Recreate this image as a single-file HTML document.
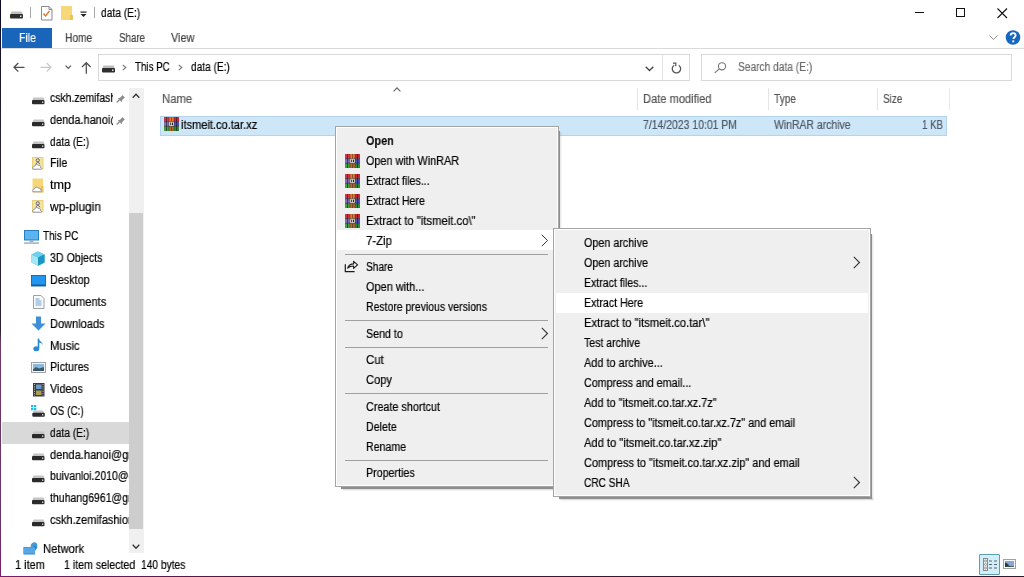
<!DOCTYPE html>
<html><head><meta charset="utf-8">
<style>
html,body{margin:0;padding:0}
body{width:1024px;height:577px;overflow:hidden;position:relative;background:#fff;font-family:"Liberation Sans",sans-serif;}
.a{position:absolute}
.t{position:absolute;white-space:nowrap;font-size:12px;line-height:20px;color:#000;-webkit-text-stroke:0.2px currentColor}
.t>div{transform-origin:0 0;will-change:transform}
svg{position:absolute;overflow:visible}
.menu{position:absolute;background:#efefef;border:1px solid #a4a4a4;box-shadow:inset 1px 1px 0 #fff,inset -1px -1px 0 #fff}
.sep{position:absolute;height:1px;background:#a0a0a0}
.hl{position:absolute;background:#fff}
.drv{position:absolute;width:12px;height:7px}
</style></head><body>
<!-- window border -->
<div class="a" style="left:0;top:0;width:1px;height:577px;background:linear-gradient(#0e0a26 0px,#2a2434 150px,#2a2030 330px,#6a3a6a 342px,#6a3468 520px,#7a2072 577px)"></div>
<div class="a" style="left:0;top:576px;width:1024px;height:1px;background:linear-gradient(90deg,#7a1a70,#3a1838 30%,#2a1a30)"></div>

<!-- title bar icons -->
<svg style="left:10px;top:11px" width="13" height="8"><path d="M1.5 0.5h10l1 2.5h-12z" fill="#bdbdbd"/><rect x="0" y="3" width="13" height="4.5" rx="1" fill="#2e2e2e"/><rect x="10" y="4.5" width="1.5" height="1.5" fill="#ddd"/></svg>
<div class="a" style="left:30px;top:7px;width:1px;height:11px;background:#a8a8a8"></div>
<svg style="left:41px;top:6px" width="12" height="15"><path d="M0.5 0.5h7.5l3 3v10.5h-10.5z" fill="#fff" stroke="#8a8a8a"/><path d="M8 0.5v3h3" fill="none" stroke="#8a8a8a"/><path d="M2.5 7.5l2 2.5l4-5" fill="none" stroke="#d8742c" stroke-width="1.3"/></svg>
<svg style="left:61px;top:6px" width="12" height="15"><rect x="0" y="0" width="11" height="14" fill="#f6d879"/><rect x="9" y="9" width="3" height="5" fill="#eac45a"/></svg>
<svg style="left:80px;top:11px" width="8" height="7"><rect x="0.5" y="0.5" width="6" height="1.2" fill="#222"/><path d="M0.5 3h6l-3 3z" fill="#222"/></svg>
<div class="a" style="left:94px;top:7px;width:1px;height:11px;background:#a8a8a8"></div>

<!-- window controls -->
<div class="a" style="left:915px;top:12px;width:9px;height:1px;background:#111"></div>
<div class="a" style="left:956px;top:8px;width:7px;height:7px;border:1px solid #111"></div>
<svg style="left:997px;top:8px" width="11" height="10"><path d="M0.5 0.5l9.5 9.5M10 0.5l-9.5 9.5" stroke="#111" stroke-width="1.1"/></svg>

<!-- ribbon -->
<div class="a" style="left:2px;top:28px;width:50px;height:20px;background:#1865ba"></div>
<div class="a" style="left:1px;top:48px;width:1023px;height:1px;background:#dadada"></div>
<svg style="left:989px;top:35px" width="9" height="6"><path d="M0.5 0.5l4 4l4-4" fill="none" stroke="#8a8a8a" stroke-width="1"/></svg>
<svg style="left:1005px;top:30px" width="16" height="16"><circle cx="8" cy="7.5" r="7.3" fill="#1667c1"/><path d="M5.6 5.6c0-1.6 1.1-2.5 2.5-2.5s2.5 0.9 2.5 2.3c0 1.8-2.2 1.9-2.2 3.7" fill="none" stroke="#fff" stroke-width="1.8"/><rect x="7.3" y="10.4" width="1.9" height="1.9" fill="#fff"/></svg>

<!-- nav buttons -->
<svg style="left:13px;top:62px" width="12" height="11"><path d="M1 5.3h10.5M5.3 1l-4.3 4.3l4.3 4.3" fill="none" stroke="#505050" stroke-width="1.3"/></svg>
<svg style="left:40px;top:62px" width="12" height="11"><path d="M0.5 5.3h10.5M6.7 1l4.3 4.3l-4.3 4.3" fill="none" stroke="#c8c8c8" stroke-width="1.2"/></svg>
<svg style="left:65px;top:65px" width="7" height="5"><path d="M0.6 0.6l2.7 2.7l2.7-2.7" fill="none" stroke="#555" stroke-width="1.2"/></svg>
<svg style="left:81px;top:62px" width="11" height="12"><path d="M5.3 11.8v-11M1 5l4.3-4.3l4.3 4.3" fill="none" stroke="#505050" stroke-width="1.3"/></svg>

<!-- address box -->
<div class="a" style="left:98px;top:54px;width:590px;height:25px;border:1px solid #d9d9d9"></div>
<div class="a" style="left:662px;top:55px;width:1px;height:25px;background:#e5e5e5"></div>
<svg style="left:102px;top:65px" width="13" height="8"><path d="M1.5 0.5h10l1 2.5h-12z" fill="#bdbdbd"/><rect x="0" y="3" width="13" height="4.5" rx="1" fill="#2e2e2e"/><rect x="10" y="4.5" width="1.5" height="1.5" fill="#ddd"/></svg>
<svg style="left:122px;top:64px" width="5" height="7"><path d="M0.8 0.8l3 2.7l-3 2.7" fill="none" stroke="#777" stroke-width="1.1"/></svg>
<svg style="left:178px;top:64px" width="5" height="7"><path d="M0.8 0.8l3 2.7l-3 2.7" fill="none" stroke="#777" stroke-width="1.1"/></svg>
<svg style="left:645px;top:66px" width="9" height="6"><path d="M0.7 0.7l3.8 3.8l3.8-3.8" fill="none" stroke="#444" stroke-width="1.3"/></svg>
<svg style="left:671px;top:62px" width="11" height="12"><path d="M3.2 3.2a4.2 4.2 0 1 0 4.5 0" fill="none" stroke="#555" stroke-width="1.3"/><path d="M2 1.2h2.8v3" fill="none" stroke="#555" stroke-width="1.2"/></svg>

<!-- search box -->
<div class="a" style="left:701px;top:54px;width:309px;height:25px;border:1px solid #d9d9d9"></div>
<svg style="left:714px;top:62px" width="13" height="11"><circle cx="8" cy="4.3" r="3.6" fill="none" stroke="#777" stroke-width="1.1"/><path d="M5.3 6.9l-4.6 4" stroke="#777" stroke-width="1.2"/></svg>

<!-- nav pane scrollbar -->
<div class="a" style="left:129px;top:88px;width:15px;height:465px;background:#f0f0f0"></div>
<div class="a" style="left:129px;top:213px;width:14px;height:316px;background:#cdcdcd"></div>
<svg style="left:132px;top:93px" width="8" height="6"><path d="M0.7 4.7l3.3-3.5l3.3 3.5" fill="none" stroke="#333" stroke-width="1.3"/></svg>
<svg style="left:132px;top:544px" width="8" height="6"><path d="M0.7 0.8l3.3 3.5l3.3-3.5" fill="none" stroke="#333" stroke-width="1.3"/></svg>
<!-- nav highlight data (E:) -->
<div class="a" style="left:2px;top:422px;width:127px;height:22px;background:#d9d9d9"></div>

<svg style="left:32px;top:97px" width="13" height="8"><path d="M1.5 0.5h10l1 2.5h-12z" fill="#c4c4c4"/><rect x="0" y="3" width="12.5" height="4.3" rx="1" fill="#2a2a2a"/><rect x="10" y="4.5" width="1.3" height="1.3" fill="#eee"/></svg>
<svg style="left:32px;top:119px" width="13" height="8"><path d="M1.5 0.5h10l1 2.5h-12z" fill="#c4c4c4"/><rect x="0" y="3" width="12.5" height="4.3" rx="1" fill="#2a2a2a"/><rect x="10" y="4.5" width="1.3" height="1.3" fill="#eee"/></svg>
<svg style="left:32px;top:141px" width="13" height="8"><path d="M1.5 0.5h10l1 2.5h-12z" fill="#c4c4c4"/><rect x="0" y="3" width="12.5" height="4.3" rx="1" fill="#2a2a2a"/><rect x="10" y="4.5" width="1.3" height="1.3" fill="#eee"/></svg>
<svg style="left:116px;top:94px" width="10" height="9"><path d="M0.7 8.5l3-3" stroke="#8c8c8c" stroke-width="1.3"/><path d="M1.8 4.3l3.9 3.9l0.5-2.2l2.2-2.2l0.9 0.2l-3.3-3.3l0.2 0.9l-2.2 2.2z" fill="#8c8c8c"/></svg>
<svg style="left:116px;top:116px" width="10" height="9"><path d="M0.7 8.5l3-3" stroke="#8c8c8c" stroke-width="1.3"/><path d="M1.8 4.3l3.9 3.9l0.5-2.2l2.2-2.2l0.9 0.2l-3.3-3.3l0.2 0.9l-2.2 2.2z" fill="#8c8c8c"/></svg>
<svg style="left:32px;top:157px" width="12" height="13"><rect x="0.5" y="0.5" width="10.5" height="11.5" fill="#f7e3a0" stroke="#e8cf7a" stroke-width="1"/><circle cx="5.8" cy="3.3" r="1.6" fill="none" stroke="#5a6a80" stroke-width="1"/><path d="M3.5 7.2l2.3-2.2l2.3 2.2" fill="none" stroke="#5a6a80" stroke-width="1"/><path d="M1 12.2c-0.8-1.5 0.2-3 1.6-3c0.4-1.6 2.6-2.3 3.8-0.8c1.3-0.3 2.4 0.8 2.1 2c1.2 0 1.4 1.8 0.3 1.8z" fill="#fff" stroke="#7a8aac" stroke-width="0.9"/></svg>
<svg style="left:32px;top:178px" width="12" height="15"><path d="M0.5 0.5h10.5v14h-10.5z" fill="#f6d676"/><rect x="9" y="8" width="2.5" height="6.5" fill="#e6c05a"/><path d="M1 13.8c-0.8-1.5 0.2-3 1.6-3c0.4-1.6 2.6-2.3 3.8-0.8c1.3-0.3 2.4 0.8 2.1 2c1.2 0 1.4 1.8 0.3 1.8z" fill="#fff" stroke="#7a8aac" stroke-width="0.9"/></svg>
<svg style="left:32px;top:200px" width="12" height="13"><rect x="0.5" y="0.5" width="10.5" height="11.5" fill="#f7e3a0" stroke="#e8cf7a" stroke-width="1"/><circle cx="5.8" cy="3.3" r="1.6" fill="none" stroke="#5a6a80" stroke-width="1"/><path d="M3.5 7.2l2.3-2.2l2.3 2.2" fill="none" stroke="#5a6a80" stroke-width="1"/><path d="M1 12.2c-0.8-1.5 0.2-3 1.6-3c0.4-1.6 2.6-2.3 3.8-0.8c1.3-0.3 2.4 0.8 2.1 2c1.2 0 1.4 1.8 0.3 1.8z" fill="#fff" stroke="#7a8aac" stroke-width="0.9"/></svg>
<svg style="left:23.5px;top:230px" width="15" height="14"><rect x="0.5" y="0.5" width="14" height="9.5" fill="#5ab4ef" stroke="#2a7cc0" stroke-width="1"/><rect x="5.5" y="10.5" width="4" height="1.5" fill="#9ab"/><rect x="0" y="12.5" width="15" height="1.2" fill="#8a9aa8"/></svg>
<svg style="left:31px;top:251px" width="14" height="15"><path d="M7 0.5l6.5 3v8l-6.5 3.2l-6.5-3.2v-8z" fill="#2ab2d8"/><path d="M0.5 3.5l6.5 3v8.2l-6.5-3.2z" fill="#a6e6f4"/><path d="M7 0.5l6.5 3l-6.5 3l-6.5-3z" fill="#6fd0ec"/><path d="M13.5 3.5l-6.5 3v8.2l6.5-3.2z" fill="#1c98c4"/></svg>
<svg style="left:30.6px;top:275px" width="15" height="12"><rect x="0.5" y="0.5" width="14" height="10.5" fill="#2196f0" stroke="#1a6eb8" stroke-width="1"/><rect x="1" y="9.5" width="13" height="1.5" fill="#1a5a9a"/></svg>
<svg style="left:32.5px;top:295px" width="12" height="14"><path d="M0.5 0.5h7.5l3 3v10h-10.5z" fill="#fafafa" stroke="#9aa0a8" stroke-width="1"/><path d="M2.5 4h4M2.5 6h6M2.5 8h6M2.5 10h6" stroke="#5a9ad0" stroke-width="0.9"/></svg>
<svg style="left:30.6px;top:316px" width="15" height="15"><path d="M5 0.5h5v7h4.5l-7 7l-7-7h4.5z" fill="#3d8fd8"/></svg>
<svg style="left:32.5px;top:338px" width="11" height="14"><path d="M5.5 0.5v9.5" stroke="#2a8ad8" stroke-width="1.6"/><ellipse cx="3.3" cy="10.8" rx="3" ry="2.5" fill="#2a8ad8"/><path d="M5.5 0.8c0.5 2.5 4.8 3.2 4.5 7c-0.2-2.3-2.5-3-4.5-3.2z" fill="#2a8ad8"/></svg>
<svg style="left:30.6px;top:362px" width="15" height="11"><rect x="0.5" y="0.5" width="14" height="10" fill="#f4f4f4" stroke="#a0a4a8" stroke-width="1"/><rect x="2" y="2" width="11" height="7" fill="#8ab8e0"/><path d="M2 7.5l3-2.5l3 1.5l5-1.5v4h-11z" fill="#3a5a6a"/></svg>
<svg style="left:32.5px;top:383px" width="12" height="14"><rect x="0" y="0" width="11.5" height="13.5" fill="#3a3a44"/><rect x="3" y="1.5" width="5.5" height="4.5" fill="#6a9ac8"/><rect x="3" y="7.5" width="5.5" height="4.5" fill="#a8a050"/><path d="M1.5 1v12M10 1v12" stroke="#ccc" stroke-width="0.9" stroke-dasharray="1 1.3"/></svg>
<svg style="left:30px;top:405px" width="15" height="12"><rect x="1" y="0" width="2.3" height="2.3" fill="#1fb8e8"/><rect x="4" y="0" width="2.3" height="2.3" fill="#1fb8e8"/><rect x="1" y="3" width="2.3" height="2.3" fill="#1fb8e8"/><rect x="4" y="3" width="2.3" height="2.3" fill="#1fb8e8"/><path d="M3.5 5.5h9.5l1 2.5h-11z" fill="#c4c4c4"/><rect x="2.3" y="7.8" width="12.5" height="4" rx="1" fill="#2a2a2a"/><rect x="12" y="9.2" width="1.3" height="1.3" fill="#eee"/></svg>
<svg style="left:32px;top:431px" width="13" height="8"><path d="M1.5 0.5h10l1 2.5h-12z" fill="#c4c4c4"/><rect x="0" y="3" width="12.5" height="4.3" rx="1" fill="#2a2a2a"/><rect x="10" y="4.5" width="1.3" height="1.3" fill="#eee"/></svg>
<svg style="left:32px;top:453px" width="13" height="8"><path d="M1.5 0.5h10l1 2.5h-12z" fill="#c4c4c4"/><rect x="0" y="3" width="12.5" height="4.3" rx="1" fill="#2a2a2a"/><rect x="10" y="4.5" width="1.3" height="1.3" fill="#eee"/></svg>
<svg style="left:32px;top:475px" width="13" height="8"><path d="M1.5 0.5h10l1 2.5h-12z" fill="#c4c4c4"/><rect x="0" y="3" width="12.5" height="4.3" rx="1" fill="#2a2a2a"/><rect x="10" y="4.5" width="1.3" height="1.3" fill="#eee"/></svg>
<svg style="left:32px;top:497px" width="13" height="8"><path d="M1.5 0.5h10l1 2.5h-12z" fill="#c4c4c4"/><rect x="0" y="3" width="12.5" height="4.3" rx="1" fill="#2a2a2a"/><rect x="10" y="4.5" width="1.3" height="1.3" fill="#eee"/></svg>
<svg style="left:32px;top:519px" width="13" height="8"><path d="M1.5 0.5h10l1 2.5h-12z" fill="#c4c4c4"/><rect x="0" y="3" width="12.5" height="4.3" rx="1" fill="#2a2a2a"/><rect x="10" y="4.5" width="1.3" height="1.3" fill="#eee"/></svg>
<svg style="left:23.4px;top:542.4px" width="15" height="12"><path d="M7.5 4.5c0-2.5 2-4.2 4-4.2c2 0 3.2 2 2.8 4.2l-1.5 2.5z" fill="#4a9ad8"/><path d="M0.5 5h9.5l2-2l2.5 2.5l-2.5 3.5v3.5h-11.5z" fill="#2d8ad6"/><rect x="0.5" y="5.5" width="11.5" height="6" fill="#58a8e8"/></svg>

<!-- column headers -->
<svg style="left:393px;top:87px" width="8" height="5"><path d="M0.6 4.3l3.4-3.4l3.4 3.4" fill="none" stroke="#606060" stroke-width="1.1"/></svg>
<div class="a" style="left:637px;top:88px;width:1px;height:22px;background:#e5e5e5"></div>
<div class="a" style="left:768px;top:88px;width:1px;height:22px;background:#e5e5e5"></div>
<div class="a" style="left:877px;top:88px;width:1px;height:22px;background:#e5e5e5"></div>
<div class="a" style="left:949px;top:88px;width:1px;height:22px;background:#e8e8e8"></div>

<!-- selected row -->
<div class="a" style="left:160px;top:116px;width:785px;height:18px;background:#cde6f8;border:1px solid #b3d4ec"></div>
<svg style="left:163.5px;top:117px" width="15" height="14"><rect x="0" y="0.00" width="5" height="4.67" fill="#d03848"/><rect x="5" y="0.00" width="5" height="4.67" fill="#e8782e"/><rect x="10" y="0.00" width="5" height="4.67" fill="#c42838"/><rect x="0" y="4.67" width="5" height="4.67" fill="#8070b8"/><rect x="5" y="4.67" width="5" height="4.67" fill="#f2ece6"/><rect x="10" y="4.67" width="5" height="4.67" fill="#4a50b8"/><rect x="0" y="9.34" width="5" height="4.67" fill="#3ea040"/><rect x="5" y="9.34" width="5" height="4.67" fill="#b06a30"/><rect x="10" y="9.34" width="5" height="4.67" fill="#2a8a38"/><path d="M2.5 0v14M12.5 0v14" stroke="#1a1010" stroke-width="1" opacity="0.55"/><path d="M5 0v14M10 0v14" stroke="#2a1818" stroke-width="0.8" opacity="0.5"/><path d="M0 4.67h15M0 9.33h15" stroke="#1a1010" stroke-width="0.9" opacity="0.55"/><path d="M7.5 0v4.5M7.5 9.5v4.5" stroke="#1a1010" stroke-width="0.9" opacity="0.45"/><rect x="6.2" y="5.6" width="1" height="2.6" fill="#222"/><rect x="8" y="5.6" width="1" height="2.6" fill="#222"/></svg>

<!-- status bar view icons -->
<div class="a" style="left:979px;top:554px;width:21px;height:21px;background:#d2eef8;border:1px solid #5f9cb0;box-sizing:border-box;border-radius:1px"></div>
<svg style="left:983px;top:558px" width="15" height="13"><rect x="0.5" y="0.5" width="4" height="12" fill="#f4f4f4" stroke="#8a8a8a" stroke-width="1"/><circle cx="2.5" cy="3" r="1" fill="none" stroke="#777" stroke-width="0.7"/><circle cx="2.5" cy="6.5" r="1" fill="none" stroke="#777" stroke-width="0.7"/><circle cx="2.5" cy="10" r="1" fill="none" stroke="#777" stroke-width="0.7"/><path d="M6 3h3M11 3h3M6 6.5h3M11 6.5h3M6 10h3M11 10h3" stroke="#5a6670" stroke-width="1.2"/></svg>
<svg style="left:1003px;top:559px" width="13" height="10"><rect x="0.5" y="0.5" width="12" height="9" fill="#fafafa" stroke="#a0a0a0" stroke-width="1"/><path d="M2 2h9v6h-9z" fill="#86a8d8"/><path d="M2 4.5c2 0.5 3 2 5 2.5c1.5 0.3 3 0 4 0.5v0.5h-9z" fill="#3a5040"/><path d="M2 3.5c1.5 0 2.5 1.5 4 2.5l-4 2z" fill="#2a3a30"/></svg>

<!-- MENUS -->
<div class="a" style="left:559px;top:131px;width:1px;height:358px;background:#8e8e8e;box-shadow:1px 1px 2px rgba(0,0,0,0.18)"></div>
<div class="a" style="left:341px;top:487px;width:219px;height:2px;background:#8e8e8e;box-shadow:1px 1px 2px rgba(0,0,0,0.18)"></div>
<div class="menu" style="left:335px;top:126px;width:222px;height:359px"></div>
<div class="hl" style="left:337px;top:230px;width:220px;height:20px"></div>
<div class="sep" style="left:345px;top:254px;width:203px"></div>
<div class="sep" style="left:345px;top:320px;width:203px"></div>
<div class="sep" style="left:345px;top:347px;width:203px"></div>
<div class="sep" style="left:345px;top:393px;width:203px"></div>
<div class="sep" style="left:345px;top:460px;width:203px"></div>
<svg style="left:541px;top:234px" width="8" height="13"><path d="M0.8 0.8l5.7 5.7l-5.7 5.7" fill="none" stroke="#333" stroke-width="1"/></svg>
<svg style="left:541px;top:327px" width="8" height="13"><path d="M0.8 0.8l5.7 5.7l-5.7 5.7" fill="none" stroke="#333" stroke-width="1.1"/></svg>
<svg style="left:344.5px;top:154px" width="15" height="14"><rect x="0" y="0.00" width="5" height="4.67" fill="#d03848"/><rect x="5" y="0.00" width="5" height="4.67" fill="#e8782e"/><rect x="10" y="0.00" width="5" height="4.67" fill="#c42838"/><rect x="0" y="4.67" width="5" height="4.67" fill="#8070b8"/><rect x="5" y="4.67" width="5" height="4.67" fill="#f2ece6"/><rect x="10" y="4.67" width="5" height="4.67" fill="#4a50b8"/><rect x="0" y="9.34" width="5" height="4.67" fill="#3ea040"/><rect x="5" y="9.34" width="5" height="4.67" fill="#b06a30"/><rect x="10" y="9.34" width="5" height="4.67" fill="#2a8a38"/><path d="M2.5 0v14M12.5 0v14" stroke="#1a1010" stroke-width="1" opacity="0.55"/><path d="M5 0v14M10 0v14" stroke="#2a1818" stroke-width="0.8" opacity="0.5"/><path d="M0 4.67h15M0 9.33h15" stroke="#1a1010" stroke-width="0.9" opacity="0.55"/><path d="M7.5 0v4.5M7.5 9.5v4.5" stroke="#1a1010" stroke-width="0.9" opacity="0.45"/><rect x="6.2" y="5.6" width="1" height="2.6" fill="#222"/><rect x="8" y="5.6" width="1" height="2.6" fill="#222"/></svg>
<svg style="left:344.5px;top:174px" width="15" height="14"><rect x="0" y="0.00" width="5" height="4.67" fill="#d03848"/><rect x="5" y="0.00" width="5" height="4.67" fill="#e8782e"/><rect x="10" y="0.00" width="5" height="4.67" fill="#c42838"/><rect x="0" y="4.67" width="5" height="4.67" fill="#8070b8"/><rect x="5" y="4.67" width="5" height="4.67" fill="#f2ece6"/><rect x="10" y="4.67" width="5" height="4.67" fill="#4a50b8"/><rect x="0" y="9.34" width="5" height="4.67" fill="#3ea040"/><rect x="5" y="9.34" width="5" height="4.67" fill="#b06a30"/><rect x="10" y="9.34" width="5" height="4.67" fill="#2a8a38"/><path d="M2.5 0v14M12.5 0v14" stroke="#1a1010" stroke-width="1" opacity="0.55"/><path d="M5 0v14M10 0v14" stroke="#2a1818" stroke-width="0.8" opacity="0.5"/><path d="M0 4.67h15M0 9.33h15" stroke="#1a1010" stroke-width="0.9" opacity="0.55"/><path d="M7.5 0v4.5M7.5 9.5v4.5" stroke="#1a1010" stroke-width="0.9" opacity="0.45"/><rect x="6.2" y="5.6" width="1" height="2.6" fill="#222"/><rect x="8" y="5.6" width="1" height="2.6" fill="#222"/></svg>
<svg style="left:344.5px;top:194px" width="15" height="14"><rect x="0" y="0.00" width="5" height="4.67" fill="#d03848"/><rect x="5" y="0.00" width="5" height="4.67" fill="#e8782e"/><rect x="10" y="0.00" width="5" height="4.67" fill="#c42838"/><rect x="0" y="4.67" width="5" height="4.67" fill="#8070b8"/><rect x="5" y="4.67" width="5" height="4.67" fill="#f2ece6"/><rect x="10" y="4.67" width="5" height="4.67" fill="#4a50b8"/><rect x="0" y="9.34" width="5" height="4.67" fill="#3ea040"/><rect x="5" y="9.34" width="5" height="4.67" fill="#b06a30"/><rect x="10" y="9.34" width="5" height="4.67" fill="#2a8a38"/><path d="M2.5 0v14M12.5 0v14" stroke="#1a1010" stroke-width="1" opacity="0.55"/><path d="M5 0v14M10 0v14" stroke="#2a1818" stroke-width="0.8" opacity="0.5"/><path d="M0 4.67h15M0 9.33h15" stroke="#1a1010" stroke-width="0.9" opacity="0.55"/><path d="M7.5 0v4.5M7.5 9.5v4.5" stroke="#1a1010" stroke-width="0.9" opacity="0.45"/><rect x="6.2" y="5.6" width="1" height="2.6" fill="#222"/><rect x="8" y="5.6" width="1" height="2.6" fill="#222"/></svg>
<svg style="left:344.5px;top:214px" width="15" height="14"><rect x="0" y="0.00" width="5" height="4.67" fill="#d03848"/><rect x="5" y="0.00" width="5" height="4.67" fill="#e8782e"/><rect x="10" y="0.00" width="5" height="4.67" fill="#c42838"/><rect x="0" y="4.67" width="5" height="4.67" fill="#8070b8"/><rect x="5" y="4.67" width="5" height="4.67" fill="#f2ece6"/><rect x="10" y="4.67" width="5" height="4.67" fill="#4a50b8"/><rect x="0" y="9.34" width="5" height="4.67" fill="#3ea040"/><rect x="5" y="9.34" width="5" height="4.67" fill="#b06a30"/><rect x="10" y="9.34" width="5" height="4.67" fill="#2a8a38"/><path d="M2.5 0v14M12.5 0v14" stroke="#1a1010" stroke-width="1" opacity="0.55"/><path d="M5 0v14M10 0v14" stroke="#2a1818" stroke-width="0.8" opacity="0.5"/><path d="M0 4.67h15M0 9.33h15" stroke="#1a1010" stroke-width="0.9" opacity="0.55"/><path d="M7.5 0v4.5M7.5 9.5v4.5" stroke="#1a1010" stroke-width="0.9" opacity="0.45"/><rect x="6.2" y="5.6" width="1" height="2.6" fill="#222"/><rect x="8" y="5.6" width="1" height="2.6" fill="#222"/></svg>
<svg style="left:344px;top:260px" width="16" height="13"><path d="M1.3 4.3V11.6H10.6" fill="none" stroke="#1a1a1a" stroke-width="1.2"/><path d="M3.6 8.2Q5 4 9.6 3.9V1.3L13.6 4.8L9.6 8.4V6Q6 6 3.6 8.2Z" fill="none" stroke="#1a1a1a" stroke-width="1.1" stroke-linejoin="round"/></svg>

<div class="a" style="left:871px;top:234px;width:1px;height:265px;background:#8e8e8e;box-shadow:1px 1px 2px rgba(0,0,0,0.18)"></div>
<div class="a" style="left:559px;top:497px;width:313px;height:2px;background:#8e8e8e;box-shadow:1px 1px 2px rgba(0,0,0,0.18)"></div>
<div class="menu" style="left:553px;top:228px;width:316px;height:267px"></div>
<div class="hl" style="left:556px;top:293px;width:312px;height:20px"></div>
<svg style="left:853px;top:256px" width="8" height="13"><path d="M0.8 0.8l5.7 5.7l-5.7 5.7" fill="none" stroke="#333" stroke-width="1.1"/></svg>
<svg style="left:853px;top:476px" width="8" height="13"><path d="M0.8 0.8l5.7 5.7l-5.7 5.7" fill="none" stroke="#333" stroke-width="1.1"/></svg>

<div class="t" style="left:100.9px;top:3px"><div style="transform:scaleX(0.8518)">data (E:)</div></div>
<div class="t" style="left:18.7px;top:28px;color:#fff"><div style="transform:scaleX(0.8740)">File</div></div>
<div class="t" style="left:65.2px;top:28px;color:#444"><div style="transform:scaleX(0.8497)">Home</div></div>
<div class="t" style="left:119.2px;top:28px;color:#444"><div style="transform:scaleX(0.8151)">Share</div></div>
<div class="t" style="left:171.3px;top:28px;color:#444"><div style="transform:scaleX(0.9033)">View</div></div>
<div class="t" style="left:135.0px;top:57px"><div style="transform:scaleX(0.8131)">This PC</div></div>
<div class="t" style="left:191.0px;top:57px"><div style="transform:scaleX(0.8431)">data (E:)</div></div>
<div class="t" style="left:737.7px;top:57px;color:#6d6d6d"><div style="transform:scaleX(0.8492)">Search data (E:)</div></div>
<div class="t" style="left:162.1px;top:89px;color:#555555"><div style="transform:scaleX(0.9435)">Name</div></div>
<div class="t" style="left:642.6px;top:89px;color:#555555"><div style="transform:scaleX(0.9252)">Date modified</div></div>
<div class="t" style="left:774.1px;top:89px;color:#555555"><div style="transform:scaleX(0.8456)">Type</div></div>
<div class="t" style="left:882.9px;top:89px;color:#555555"><div style="transform:scaleX(0.8268)">Size</div></div>
<div class="t" style="left:181.2px;top:115px"><div style="transform:scaleX(0.9215)">itsmeit.co.tar.xz</div></div>
<div class="t" style="left:642.6px;top:115px;color:#4f5a68"><div style="transform:scaleX(0.8697)">7/14/2023 10:01 PM</div></div>
<div class="t" style="left:774.1px;top:115px;color:#4f5a68"><div style="transform:scaleX(0.8703)">WinRAR archive</div></div>
<div class="t" style="left:922.1px;top:115px;color:#4f5a68"><div style="transform:scaleX(0.8072)">1 KB</div></div>
<div class="t" style="left:49.7px;top:88px;width:63.8px;overflow:hidden"><div style="transform:scaleX(0.8695)">cskh.zemifashion@gmail.com</div></div>
<div class="t" style="left:49.7px;top:110px;width:63.8px;overflow:hidden"><div style="transform:scaleX(0.9127)">denda.hanoi@gmail.com</div></div>
<div class="t" style="left:49.7px;top:132px"><div style="transform:scaleX(0.8518)">data (E:)</div></div>
<div class="t" style="left:49.7px;top:153px"><div style="transform:scaleX(0.8947)">File</div></div>
<div class="t" style="left:49.7px;top:175px"><div style="transform:scaleX(1.0498)">tmp</div></div>
<div class="t" style="left:49.7px;top:197px"><div style="transform:scaleX(0.9910)">wp-plugin</div></div>
<div class="t" style="left:42.6px;top:226px"><div style="transform:scaleX(0.8272)">This PC</div></div>
<div class="t" style="left:49.7px;top:248px"><div style="transform:scaleX(0.8845)">3D Objects</div></div>
<div class="t" style="left:49.7px;top:270px"><div style="transform:scaleX(0.8996)">Desktop</div></div>
<div class="t" style="left:49.7px;top:292px"><div style="transform:scaleX(0.9276)">Documents</div></div>
<div class="t" style="left:49.7px;top:314px"><div style="transform:scaleX(0.9197)">Downloads</div></div>
<div class="t" style="left:49.7px;top:336px"><div style="transform:scaleX(0.9446)">Music</div></div>
<div class="t" style="left:49.7px;top:357px"><div style="transform:scaleX(0.8997)">Pictures</div></div>
<div class="t" style="left:49.7px;top:379px"><div style="transform:scaleX(0.8993)">Videos</div></div>
<div class="t" style="left:49.7px;top:401px"><div style="transform:scaleX(0.8287)">OS (C:)</div></div>
<div class="t" style="left:49.7px;top:423px"><div style="transform:scaleX(0.8518)">data (E:)</div></div>
<div class="t" style="left:49.7px;top:445px;width:79.3px;overflow:hidden"><div style="transform:scaleX(0.9227)">denda.hanoi@gmail.com</div></div>
<div class="t" style="left:49.7px;top:466px;width:79.3px;overflow:hidden"><div style="transform:scaleX(0.8760)">buivanloi.2010@gmail.com</div></div>
<div class="t" style="left:49.7px;top:488px;width:79.3px;overflow:hidden"><div style="transform:scaleX(0.8778)">thuhang6961@gmail.com</div></div>
<div class="t" style="left:49.7px;top:510px;width:79.3px;overflow:hidden"><div style="transform:scaleX(0.9137)">cskh.zemifashion@gmail.com</div></div>
<div class="t" style="left:42.6px;top:539px"><div style="transform:scaleX(0.9362)">Network</div></div>
<div class="t" style="left:14.5px;top:555px"><div style="transform:scaleX(0.9119)">1 item</div></div>
<div class="t" style="left:63.8px;top:555px"><div style="transform:scaleX(0.8834)">1 item selected</div></div>
<div class="t" style="left:140.9px;top:555px"><div style="transform:scaleX(0.8532)">140 bytes</div></div>
<div class="t" style="left:366.0px;top:131px;font-weight:bold;-webkit-text-stroke:0"><div style="transform:scaleX(0.9065)">Open</div></div>
<div class="t" style="left:366.0px;top:151px"><div style="transform:scaleX(0.8997)">Open with WinRAR</div></div>
<div class="t" style="left:366.0px;top:171px"><div style="transform:scaleX(0.8831)">Extract files...</div></div>
<div class="t" style="left:366.0px;top:191px"><div style="transform:scaleX(0.8832)">Extract Here</div></div>
<div class="t" style="left:366.0px;top:211px"><div style="transform:scaleX(0.9404)">Extract to &quot;itsmeit.co\&quot;</div></div>
<div class="t" style="left:366.0px;top:231px"><div style="transform:scaleX(0.9437)">7-Zip</div></div>
<div class="t" style="left:366.0px;top:257px"><div style="transform:scaleX(0.8432)">Share</div></div>
<div class="t" style="left:366.0px;top:277px"><div style="transform:scaleX(0.9121)">Open with...</div></div>
<div class="t" style="left:366.0px;top:297px"><div style="transform:scaleX(0.8722)">Restore previous versions</div></div>
<div class="t" style="left:366.0px;top:324px"><div style="transform:scaleX(0.8896)">Send to</div></div>
<div class="t" style="left:366.0px;top:350px"><div style="transform:scaleX(0.9532)">Cut</div></div>
<div class="t" style="left:366.0px;top:370px"><div style="transform:scaleX(0.9281)">Copy</div></div>
<div class="t" style="left:366.0px;top:397px"><div style="transform:scaleX(0.9020)">Create shortcut</div></div>
<div class="t" style="left:366.0px;top:417px"><div style="transform:scaleX(0.8879)">Delete</div></div>
<div class="t" style="left:366.0px;top:437px"><div style="transform:scaleX(0.8819)">Rename</div></div>
<div class="t" style="left:366.0px;top:463px"><div style="transform:scaleX(0.8905)">Properties</div></div>
<div class="t" style="left:584.3px;top:233px"><div style="transform:scaleX(0.8967)">Open archive</div></div>
<div class="t" style="left:584.3px;top:253px"><div style="transform:scaleX(0.8967)">Open archive</div></div>
<div class="t" style="left:584.3px;top:273px"><div style="transform:scaleX(0.8790)">Extract files...</div></div>
<div class="t" style="left:584.3px;top:293px"><div style="transform:scaleX(0.8862)">Extract Here</div></div>
<div class="t" style="left:584.3px;top:313px"><div style="transform:scaleX(0.9366)">Extract to &quot;itsmeit.co.tar\&quot;</div></div>
<div class="t" style="left:584.3px;top:333px"><div style="transform:scaleX(0.8778)">Test archive</div></div>
<div class="t" style="left:584.3px;top:353px"><div style="transform:scaleX(0.9087)">Add to archive...</div></div>
<div class="t" style="left:584.3px;top:373px"><div style="transform:scaleX(0.8934)">Compress and email...</div></div>
<div class="t" style="left:584.3px;top:393px"><div style="transform:scaleX(0.9130)">Add to &quot;itsmeit.co.tar.xz.7z&quot;</div></div>
<div class="t" style="left:584.3px;top:413px"><div style="transform:scaleX(0.9024)">Compress to &quot;itsmeit.co.tar.xz.7z&quot; and email</div></div>
<div class="t" style="left:584.3px;top:433px"><div style="transform:scaleX(0.9283)">Add to &quot;itsmeit.co.tar.xz.zip&quot;</div></div>
<div class="t" style="left:584.3px;top:453px"><div style="transform:scaleX(0.9117)">Compress to &quot;itsmeit.co.tar.xz.zip&quot; and email</div></div>
<div class="t" style="left:584.3px;top:473px"><div style="transform:scaleX(0.8444)">CRC SHA</div></div>
</body></html>
